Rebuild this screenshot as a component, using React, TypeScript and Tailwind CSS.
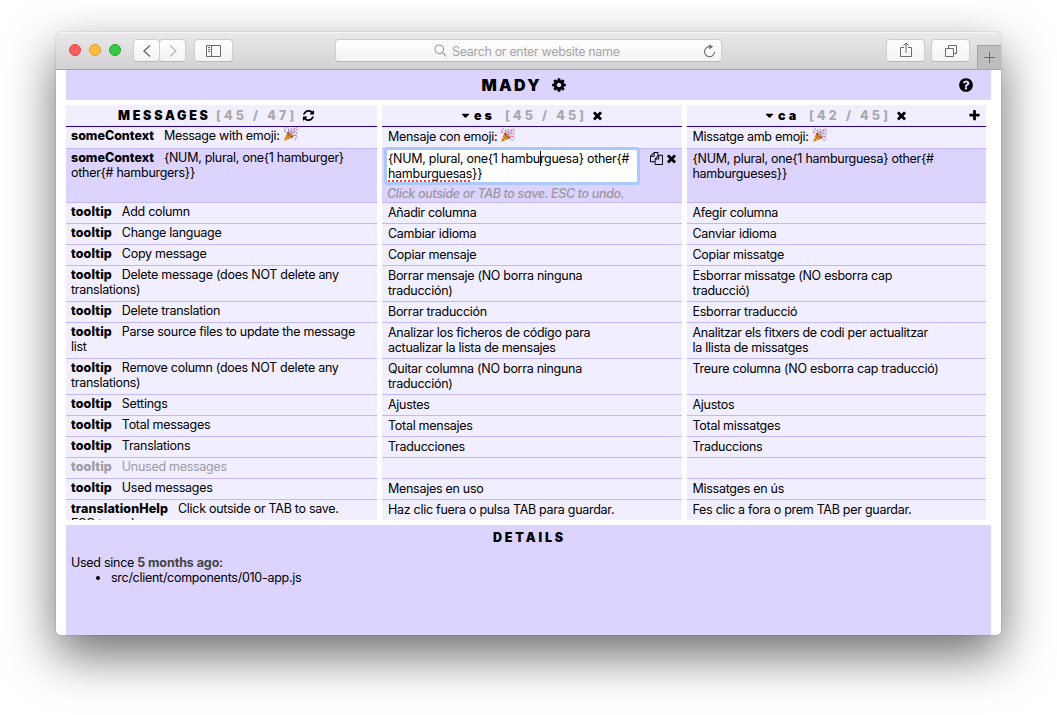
import React from 'react';

const PATHS = {
  refresh:
    'M1639 1056q0 5-1 7-64 268-268 434.5t-478 166.5q-146 0-282.5-55t-243.5-157l-129 129q-19 19-45 19t-45-19-19-45v-448q0-26 19-45t45-19h448q26 0 45 19t19 45-19 45l-137 137q71 66 161 102t187 36q134 0 250-65t186-179q11-17 53-117 8-23 30-23h192q13 0 22.5 9.5t9.5 22.5zm25-800v448q0 26-19 45t-45 19h-448q-26 0-45-19t-19-45 19-45l138-138q-148-137-349-137-134 0-250 65t-186 179q-11 17-53 117-8 23-30 23h-199q-13 0-22.5-9.5t-9.5-22.5v-7q65-268 270-434.5t480-166.5q146 0 284 55.5t245 156.5l130-129q19-19 45-19t45 19 19 45z',
  cog: 'M1152 896q0-106-75-181t-181-75-181 75-75 181 75 181 181 75 181-75 75-181zm512-109v222q0 12-8 23t-20 13l-185 28q-19 54-39 91 35 50 107 138 10 12 10 25t-9 23q-27 37-99 108t-94 71q-12 0-26-9l-138-108q-44 23-91 38-16 136-29 186-7 28-36 28h-222q-14 0-24.5-8.5t-11.5-21.5l-28-184q-49-16-90-37l-141 107q-10 9-25 9-14 0-25-11-126-114-165-168-7-10-7-23 0-12 8-23 15-21 51-66.5t54-70.5q-27-50-41-99l-183-27q-13-2-21-12.5t-8-23.5v-222q0-12 8-23t19-13l186-28q14-46 39-92-40-57-107-138-10-12-10-24 0-10 9-23 26-36 98.5-107.5t94.5-71.5q13 0 26 10l138 107q44-23 91-38 16-136 29-186 7-28 36-28h222q14 0 24.5 8.5t11.5 21.5l28 184q49 16 90 37l142-107q9-9 24-9 13 0 25 10 129 119 165 170 7 8 7 22 0 12-8 23-15 21-51 66.5t-54 70.5q26 50 41 98l183 28q13 2 21 12.5t8 23.5z',
  close:
    'M1490 1322q0 40-28 68l-136 136q-28 28-68 28t-68-28l-294-294-294 294q-28 28-68 28t-68-28l-136-136q-28-28-28-68t28-68l294-294-294-294q-28-28-28-68t28-68l136-136q28-28 68-28t68 28l294 294 294-294q28-28 68-28t68 28l136 136q28 28 28 68t-28 68l-294 294 294 294q28 28 28 68z',
  plus: 'M1600 736v192q0 40-28 68t-68 28h-416v416q0 40-28 68t-68 28h-192q-40 0-68-28t-28-68v-416h-416q-40 0-68-28t-28-68v-192q0-40 28-68t68-28h416v-416q0-40 28-68t68-28h192q40 0 68 28t28 68v416h416q40 0 68 28t28 68z',
  help: 'M1024 1376v-192q0-14-9-23t-23-9h-192q-14 0-23 9t-9 23v192q0 14 9 23t23 9h192q14 0 23-9t9-23zm256-672q0-88-55.5-163t-138.5-116-170-41q-243 0-371 213-15 24 8 42l132 100q7 6 19 6 16 0 25-12 53-68 86-92 34-24 86-24 48 0 85.5 26t37.5 59q0 38-20 61t-68 45q-63 28-115.5 86.5t-52.5 125.5v36q0 14 9 23t23 9h192q14 0 23-9t9-23q0-19 21.5-49.5t54.5-49.5q32-18 49-28.5t46-35 44.5-48 28-60.5 12.5-81zm384 192q0 209-103 385.5t-279.5 279.5-385.5 103-385.5-103-279.5-279.5-103-385.5 103-385.5 279.5-279.5 385.5-103 385.5 103 279.5 279.5 103 385.5z',
  caret: 'M1408 704q0 26-19 45l-448 448q-19 19-45 19t-45-19l-448-448q-19-19-19-45t19-45 45-19h896q26 0 45 19t19 45z',
  copy: 'M1696 384q40 0 68 28t28 68v1216q0 40-28 68t-68 28h-960q-40 0-68-28t-28-68v-288h-544q-40 0-68-28t-28-68v-672q0-40 20-88t48-76l408-408q28-28 76-48t88-20h416q40 0 68 28t28 68v328q68-40 128-40h416zm-544 213l-299 299h299v-299zm-640-384l-299 299h299v-299zm196 647l316-316v-416h-384v416q0 40-28 68t-68 28h-416v640h512v-256q0-40 20-88t48-76zm956 804v-1152h-384v416q0 40-28 68t-68 28h-416v640h896z',
};

function Icon({ name, className = 'size-[13px]' }: { name: keyof typeof PATHS; className?: string }) {
  return (
    <svg viewBox="0 0 1792 1792" fill="currentColor" className={`shrink-0 ${className}`}>
      <path d={PATHS[name]} />
    </svg>
  );
}

function Party() {
  return (
    <svg viewBox="0 0 16 16" className="ml-[3px] -mt-px inline-block size-[15px] align-top">
      <path d="M4.6 5.2 10.6 11.2 1.2 15 .8 14.6z" fill="#eda93a" />
      <path d="M3.6 8.2 6.6 12.6M2.3 11.4 4 13.6" stroke="#b5642a" strokeWidth="1.1" />
      <ellipse cx="7.6" cy="8.2" rx="1.7" ry="4.1" transform="rotate(-45 7.6 8.2)" fill="#8d4a22" />
      <ellipse cx="7.9" cy="7.9" rx="0.8" ry="2.7" transform="rotate(-45 7.9 7.9)" fill="#f2a33c" />
      <path d="M5.5 5.5Q7.4 4 5.2 1.8" stroke="#6f8fd8" strokeWidth="1.2" fill="none" />
      <path d="M8.3 6.6Q8.6 3.6 11 3.2T12.4 1" stroke="#e0629a" strokeWidth="1.2" fill="none" />
      <path d="M10 9.2Q12.4 7.6 15 10" stroke="#d05a8a" strokeWidth="1.2" fill="none" />
      <path d="M9.6 6.8 13.4 4.6" stroke="#7b7fd6" strokeWidth="1.1" />
      <path d="M1.4 2.4h1.3M3 .9h1.2M8.2 1.6h1.2M14.2 2.6h1.3M13.6 6.9h1.3M12 11.8h1.2M2.2 5h1.1" stroke="#e2506a" strokeWidth="1.1" />
      <path d="M1 4.4h1M7.4 3.5h1M14.2 .9h1M14.6 12h1M12.4 13.6h1M14.6 5h1" stroke="#5a8be0" strokeWidth="1.1" />
    </svg>
  );
}

type Row = { ctx: string; msg: string; es: string; ca: string; h: string; unused?: boolean; party?: boolean; editing?: boolean };

const ROWS: Row[] = [
  { ctx: 'someContext', msg: 'Message with emoji:', es: 'Mensaje con emoji:', ca: 'Missatge amb emoji:', h: 'h-[22px]', party: true },
  {
    ctx: 'someContext',
    msg: '{NUM, plural, one{1 hamburger}\nother{# hamburgers}}',
    es: '',
    ca: '{NUM, plural, one{1 hamburguesa} other{#\nhamburgueses}}',
    h: 'h-[54px]',
    editing: true,
  },
  { ctx: 'tooltip', msg: 'Add column', es: 'Añadir columna', ca: 'Afegir columna', h: 'h-[21px]' },
  { ctx: 'tooltip', msg: 'Change language', es: 'Cambiar idioma', ca: 'Canviar idioma', h: 'h-[21px]' },
  { ctx: 'tooltip', msg: 'Copy message', es: 'Copiar mensaje', ca: 'Copiar missatge', h: 'h-[21px]' },
  {
    ctx: 'tooltip',
    msg: 'Delete message (does NOT delete any\ntranslations)',
    es: 'Borrar mensaje (NO borra ninguna\ntraducción)',
    ca: 'Esborrar missatge (NO esborra cap\ntraducció)',
    h: 'h-[36px]',
  },
  { ctx: 'tooltip', msg: 'Delete translation', es: 'Borrar traducción', ca: 'Esborrar traducció', h: 'h-[21px]' },
  {
    ctx: 'tooltip',
    msg: 'Parse source files to update the message\nlist',
    es: 'Analizar los ficheros de código para\nactualizar la lista de mensajes',
    ca: 'Analitzar els fitxers de codi per actualitzar\nla llista de missatges',
    h: 'h-[36px]',
  },
  {
    ctx: 'tooltip',
    msg: 'Remove column (does NOT delete any\ntranslations)',
    es: 'Quitar columna (NO borra ninguna\ntraducción)',
    ca: 'Treure columna (NO esborra cap traducció)',
    h: 'h-[36px]',
  },
  { ctx: 'tooltip', msg: 'Settings', es: 'Ajustes', ca: 'Ajustos', h: 'h-[21px]' },
  { ctx: 'tooltip', msg: 'Total messages', es: 'Total mensajes', ca: 'Total missatges', h: 'h-[21px]' },
  { ctx: 'tooltip', msg: 'Translations', es: 'Traducciones', ca: 'Traduccions', h: 'h-[21px]' },
  { ctx: 'tooltip', msg: 'Unused messages', es: '', ca: '', h: 'h-[21px]', unused: true },
  { ctx: 'tooltip', msg: 'Used messages', es: 'Mensajes en uso', ca: 'Missatges en ús', h: 'h-[21px]' },
  {
    ctx: 'translationHelp',
    msg: 'Click outside or TAB to save.\nESC to undo.',
    es: 'Haz clic fuera o pulsa TAB para guardar.',
    ca: 'Fes clic a fora o prem TAB per guardar.',
    h: 'h-[36px]',
  },
];

function Editor() {
  return (
    <div className="flex">
      <div className="w-[256px] shrink-0 pl-[5px]">
        <div className="relative h-[32px] w-[250px] whitespace-pre rounded-[1px] bg-white pl-[1px] pt-px outline-[3px] outline-[#abc8fb]">
          {'{NUM, plural, one{1 hamburguesa} other{#\n'}
          <span className="underline decoration-[#ff3b30] decoration-dotted decoration-2 underline-offset-2 [text-decoration-skip-ink:none]">
            hamburguesas
          </span>
          {'}}'}
          <span className="absolute left-[153px] top-px h-[15px] w-px bg-black" />
        </div>
        <div className="mt-[4px] whitespace-nowrap font-medium italic tracking-[-0.34px] text-[#9a979f]">Click outside or TAB to save. ESC to undo.</div>
      </div>
      <div className="ml-[12px] flex gap-[2px] pt-[2px]">
        <Icon name="copy" />
        <Icon name="close" />
      </div>
    </div>
  );
}

function Translation({ row, text, first }: { row: Row; text: string; first?: boolean }) {
  const bg = row.editing ? 'bg-[#dcd3ff]' : 'bg-[#f1eeff]';
  return (
    <div className={`shrink-0 border-b border-[#c3b7f6] ${row.h} ${bg}`}>
      {row.editing && first ? (
        <div className="pt-px">
          <Editor />
        </div>
      ) : (
        <div className={`whitespace-pre pt-[2px] ${first ? 'pl-[6px]' : 'pl-[5.5px]'}`}>
          {text}
          {row.party && <Party />}
        </div>
      )}
    </div>
  );
}

const HEAD = 'flex h-[22px] shrink-0 items-center border-b border-[#23009a] bg-[#f1eeff] text-[12.5px] font-black';

function Counter({ children }: { children: string }) {
  return <span className="whitespace-pre font-extrabold tracking-[3.2px] text-[#a9a9a9]">{children}</span>;
}

function LangHead({ code, count, pad, last }: { code: string; count: string; pad: string; last?: boolean }) {
  return (
    <div className={`${HEAD} ${pad}`}>
      <Icon name="caret" />
      <span className="ml-[2px] w-[31px] tracking-[3px]">{code}</span>
      <div className="w-[86px]">
        <Counter>{count}</Counter>
      </div>
      <Icon name="close" />
      {last && <Icon name="plus" className="ml-auto mr-[5px] size-[13px]" />}
    </div>
  );
}

const BTN = 'flex h-[23px] items-center justify-center rounded-[4px] border border-[#cfcdcf] border-b-[#bab8ba] bg-gradient-to-b from-white to-[#f4f3f4]';

function Toolbar() {
  return (
    <div className="flex h-[38px] shrink-0 border-b border-[#a5a3a5] bg-gradient-to-b from-[#ebe9eb] to-[#d3d1d3] shadow-[inset_0_1px_0_#f7f6f7]">
      <div className="flex gap-[8px] pl-[13px] pt-[12px]">
        <div className="size-[12px] rounded-full border border-[#e2463f] bg-[#fc605c]" />
        <div className="size-[12px] rounded-full border border-[#dfa023] bg-[#fdbc40]" />
        <div className="size-[12px] rounded-full border border-[#27a52c] bg-[#35ca45]" />
      </div>
      <div className="ml-[12px] flex pt-[7px]">
        <div className={`${BTN} w-[27px]`}>
          <svg viewBox="0 0 10 14" className="h-[14px] w-[10px]" fill="none" stroke="#6c6a6c" strokeWidth="1.4">
            <path d="M8 1.5 2 7l6 5.5" />
          </svg>
        </div>
        <div className={`${BTN} -ml-px w-[27px]`}>
          <svg viewBox="0 0 10 14" className="h-[14px] w-[10px]" fill="none" stroke="#bdbbbd" strokeWidth="1.4">
            <path d="m2 1.5 6 5.5-6 5.5" />
          </svg>
        </div>
        <div className={`${BTN} ml-[8px] w-[39px]`}>
          <svg viewBox="0 0 15 12" className="h-[12px] w-[15px]" fill="none" stroke="#6c6a6c">
            <path d="M.5.5h14v11H.5zM5.5.5v11M2 2.5h2M2 4.5h2M2 6.5h2" />
          </svg>
        </div>
        <div className={`${BTN} ml-[102px] w-[387px] font-normal text-[#a7a5a7]`}>
          <svg viewBox="0 0 13 13" className="ml-[98px] h-[13px] w-[13px]" fill="none" stroke="#9b999b" strokeWidth="1.1">
            <circle cx="5.3" cy="5.3" r="4.3" />
            <path d="m8.5 8.5 3.8 3.8" />
          </svg>
          <span className="ml-[5px] whitespace-nowrap pt-px text-[12.5px] tracking-[-0.33px]">Search or enter website name</span>
          <svg viewBox="0 0 13 14" className="ml-auto mr-[5px] h-[14px] w-[13px]" fill="none" stroke="#6c6a6c" strokeWidth="1.1">
            <path d="M7 2.7A5 5 0 1 0 11.5 7.7" />
            <path d="M6.3.2 10 2.8 6.3 5.4z" fill="#6c6a6c" stroke="none" />
          </svg>
        </div>
        <div className={`${BTN} ml-[164px] w-[39px]`}>
          <svg viewBox="0 0 12 16" className="-mt-[2px] h-[16px] w-[12px]" fill="none" stroke="#6c6a6c">
            <path d="M4 5.5H.5v9h11v-9H8M6 11V1M3.3 3.7 6 1l2.7 2.7" />
          </svg>
        </div>
        <div className={`${BTN} ml-[6px] w-[39px]`}>
          <svg viewBox="0 0 12 12" className="h-[12px] w-[12px]" fill="none" stroke="#6c6a6c">
            <path d="M.5 3.5h8v8h-8zM3.5 3.5v-3h8v8h-3" />
          </svg>
        </div>
      </div>
      <div className="ml-auto mt-[13px] flex w-[24px] items-center justify-center border-l border-t border-[#a5a3a5] bg-[#bfbdbf]">
        <svg viewBox="0 0 11 11" className="size-[11px]" stroke="#6c6a6c">
          <path d="M5.5 0v11M0 5.5h11" />
        </svg>
      </div>
    </div>
  );
}

export default function App() {
  return (
    <div className="h-[715px] w-[1057px] overflow-hidden bg-white pl-[56px] pt-[32px] font-['Inter',sans-serif] text-[12.5px] leading-[15px] tracking-[-0.28px] text-black">
      <div className="h-[603px] w-[945px] rounded-[5px] shadow-[0_0_1px_rgba(0,0,0,0.6),0_20px_50px_rgba(0,0,0,0.58)]">
        <div className="flex h-full flex-col overflow-hidden rounded-[5px] bg-white">
          <Toolbar />
          <div className="mx-[10px] flex h-[30px] shrink-0 items-center bg-[#dcd3ff] pl-[415.5px]">
            <span className="w-[69.5px] text-[16px] font-black tracking-[2.3px]">MADY</span>
            <Icon name="cog" className="size-[16px]" />
            <Icon name="help" className="ml-auto mr-[17px] size-[16px]" />
          </div>
          <div className="ml-[10px] mt-[5px] flex h-[415px] shrink-0 gap-[5px] overflow-hidden">
            <div className="flex w-[311px] flex-col">
              <div className={`${HEAD} pl-[52px]`}>
                <span className="w-[98px] tracking-[2.75px]">MESSAGES</span>
                <div className="w-[86px]">
                  <Counter>[45 / 47]</Counter>
                </div>
                <Icon name="refresh" />
              </div>
              {ROWS.map((r, i) => (
                <div
                  key={i}
                  className={`shrink-0 whitespace-pre border-b border-[#c3b7f6] pl-[5px] pt-px ${r.h} ${r.editing ? 'bg-[#dcd3ff]' : 'bg-[#f1eeff]'} ${r.unused ? 'text-[#9d9ba3]' : ''}`}
                >
                  <span className={`mr-[10px] font-extrabold ${r.ctx === 'someContext' ? '-tracking-[0.03px]' : 'tracking-[0.1px]'}`}>{r.ctx}</span>
                  {r.msg}
                  {r.party && <Party />}
                </div>
              ))}
            </div>
            <div className="flex w-[300px] flex-col">
              <LangHead code="es" count="[45 / 45]" pad="pl-[77px]" />
              {ROWS.map((r, i) => (
                <Translation key={i} row={r} text={r.es} first />
              ))}
            </div>
            <div className="flex w-[299px] flex-col">
              <LangHead code="ca" count="[42 / 45]" pad="pl-[76px]" last />
              {ROWS.map((r, i) => (
                <Translation key={i} row={r} text={r.ca} />
              ))}
            </div>
          </div>
          <div className="mx-[10px] mt-[5px] flex-1 bg-[#dcd3ff] px-[5px] pt-[5px]">
            <div className="pl-[2px] text-center font-black tracking-[2.85px]">DETAILS</div>
            <div className="mt-[10px]">
              Used since <span className="font-bold tracking-[-0.08px] text-[#444]">5 months ago</span>:
            </div>
            <ul className="list-disc pl-[40px]">
              <li>src/client/components/010-app.js</li>
            </ul>
          </div>
        </div>
      </div>
    </div>
  );
}
